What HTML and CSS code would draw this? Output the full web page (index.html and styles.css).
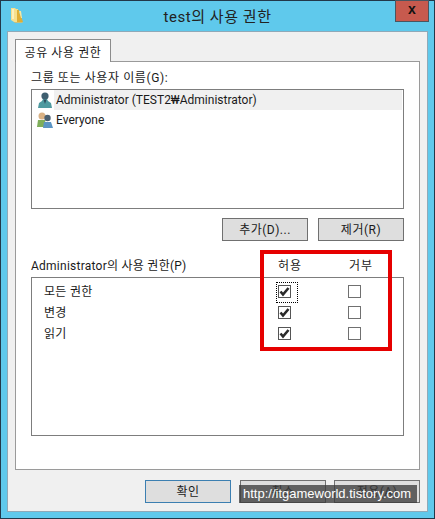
FILE: index.html
```html
<!DOCTYPE html>
<html lang="ko">
<head>
<meta charset="utf-8">
<title>test의 사용 권한</title>
<link rel="stylesheet" href="styles.css">
</head>
<body>
<div class="window">
  <header class="titlebar">
    <svg class="folder" width="13" height="17" viewBox="0 0 13 17"><path d="M0 1h4l1 1h2v13H3l-3-2z" fill="#f6e08e"/><path d="M6 3h2v2l3 7 1 3H6z" fill="#dfae35"/><path d="M8 4h2l1 7H10z" fill="#f8e6a0"/><path d="M3 15h8l1 1H4z" fill="#c9c07a"/><path d="M1 2h2v10H1z" fill="#fcf0bd"/></svg>
    <h1 class="title">test의 사용 권한</h1>
    <button class="close">x</button>
  </header>
  <main class="content">
    <div class="tabs"><div class="tab">공유 사용 권한</div></div>
    <section class="panel">
      <div class="label">그룹 또는 사용자 이름(G):</div>
      <ul class="list users">
        <li class="user selected">
          <svg class="uicon" width="16" height="18" viewBox="0 0 16 18"><circle cx="8" cy="5" r="3.6" fill="#3f5f70"/><path d="M6 8h4l1 2 3 2 1 5H1l1-5 3-2z" fill="#4f9aa0"/><path d="M6.500 8.500h3L8 13z" fill="#2f4c5c"/></svg>
          <span class="uname">Administrator (TEST2₩Administrator)</span>
        </li>
        <li class="user">
          <svg class="uicon" width="16" height="18" viewBox="0 0 16 18"><circle cx="5" cy="5" r="3.500" fill="#d9b184"/><path d="M1 9h7l1 7H0z" fill="#7fae5a"/><circle cx="10.500" cy="7" r="3.200" fill="#4a5f70"/><path d="M7 11h7l2 6H6z" fill="#5b94c4"/></svg>
          <span class="uname">Everyone</span>
        </li>
      </ul>
      <div class="actions">
        <button class="btn">추가(D)...</button>
        <button class="btn">제거(R)</button>
      </div>
      <div class="perm-head">
        <span class="perm-title">Administrator의 사용 권한(P)</span>
        <span class="perm-col">허용</span>
        <span class="perm-col">거부</span>
      </div>
      <div class="list perms">
        <span class="perm-name">모든 권한</span>
        <span class="box checked focus"><svg class="tick" width="11" height="11" viewBox="0 0 11 11"><path d="M1.500 5.500 4 8.500 9.500 2" fill="none" stroke="#2a2a2a" stroke-width="2.600"/></svg></span>
        <span class="box"></span>
        <span class="perm-name">변경</span>
        <span class="box checked"><svg class="tick" width="11" height="11" viewBox="0 0 11 11"><path d="M1.500 5.500 4 8.500 9.500 2" fill="none" stroke="#2a2a2a" stroke-width="2.600"/></svg></span>
        <span class="box"></span>
        <span class="perm-name">읽기</span>
        <span class="box checked"><svg class="tick" width="11" height="11" viewBox="0 0 11 11"><path d="M1.500 5.500 4 8.500 9.500 2" fill="none" stroke="#2a2a2a" stroke-width="2.600"/></svg></span>
        <span class="box"></span>
      </div>
    </section>
    <footer class="footer">
      <button class="btn default">확인</button>
      <button class="btn">취소</button>
      <button class="btn">적용(A)</button>
    </footer>
  </main>
  <div class="highlight"></div>
  <div class="watermark">http://itgameworld.tistory.com</div>
</div>
</body>
</html>
```
FILE: styles.css
```css
* { box-sizing: border-box; }
html, body { margin: 0; padding: 0; }
body {
  width: 435px;
  height: 519px;
  overflow: hidden;
  font-family: Roboto, "Noto Sans CJK KR", sans-serif;
  font-size: 12px;
  color: #1a1a1a;
}
.window {
  position: relative;
  width: 435px;
  height: 519px;
  display: flex;
  flex-direction: column;
  padding: 0 6px 6px;
  background: #5fc9ec;
  border: 1px solid #22384a;
}
.titlebar {
  position: relative;
  height: 30px;
  flex: none;
  padding-bottom: 2px;
  display: flex;
  align-items: center;
  justify-content: center;
}
.folder { position: absolute; left: 4px; top: 6px; }
.title {
  margin: 0;
  font-size: 15px;
  font-weight: 400;
  letter-spacing: .55px;
  color: #222;
}
.close {
  position: absolute;
  right: -1px;
  top: -1px;
  width: 34px;
  height: 22px;
  padding: 0 0 4px;
  border: 1px solid #4a5560;
  background: #c75a4e;
  color: #111;
  font: 700 14px "Liberation Sans", sans-serif;
}
.content {
  flex: 1;
  display: flex;
  flex-direction: column;
  padding: 7px 7px 8px;
  background: #f0f0f0;
  border: 1px solid #8fa9b8;
}
.tabs { display: flex; height: 23px; flex: none; }
.tab {
  position: relative;
  z-index: 1;
  height: 23px;
  width: 96px;
  display: flex;
  align-items: center;
  justify-content: center;
  background: #fff;
  border: 1px solid #8c8c8c;
  border-bottom: 0;
  letter-spacing: .6px;
}
.panel {
  flex: 1;
  margin-top: -1px;
  padding: 7px 15px 0;
  background: #fff;
  border: 1px solid #9a9a9a;
  display: flex;
  flex-direction: column;
}
.label { height: 20px; line-height: 19px; letter-spacing: .6px; }
.list {
  margin: 0;
  padding: 0;
  list-style: none;
  background: #fff;
  border: 1px solid #7d7d7d;
}
.users { height: 120px; padding: 0 1px; }
.user {
  height: 20px;
  display: flex;
  align-items: center;
  padding-left: 4px;
  gap: 1px;
}
.uicon { flex: none; }
.uname { flex: 1; height: 20px; line-height: 20px; padding-left: 2px; }
.selected .uname { background: #f0f0f0; }
.actions {
  display: flex;
  justify-content: flex-end;
  gap: 10px;
  margin-top: 9px;
}
.btn {
  width: 86px;
  height: 23px;
  padding: 0 0 2px;
  font: inherit;
  letter-spacing: .5px;
  color: #1a1a1a;
  background: #dedede;
  border: 1px solid #707070;
}
.default { border-color: #3c7fb1; margin-right: 1px; }
.perm-head {
  display: flex;
  align-items: center;
  height: 22px;
  margin-top: 14px;
  padding: 0 23px 3px 0;
}
.perm-title { flex: 1; letter-spacing: .25px; }
.perm-col { width: 40px; margin-left: 31px; text-align: center; letter-spacing: 1px; }
.perms {
  height: 159px;
  padding-top: 3px;
  display: grid;
  grid-template-columns: 246px 13px 57px 13px;
  grid-auto-rows: 21px;
  align-items: center;
  align-content: start;
}
.perm-name { padding: 0 0 2px 12px; letter-spacing: .3px; }
.box {
  position: relative;
  width: 13px;
  height: 13px;
  background: #fff;
  border: 1px solid #707070;
  grid-column: 4;
  display: block;
}
.box.checked { grid-column: 2; border-color: #555; }
.tick { display: block; }
.focus::after {
  content: "";
  position: absolute;
  left: -3px;
  top: -4px;
  width: 20px;
  height: 19px;
  border: 1px dotted #000;
}
.footer {
  display: flex;
  justify-content: flex-end;
  gap: 8px;
  margin-top: 10px;
}
.highlight {
  position: absolute;
  left: 259px;
  top: 249px;
  width: 132px;
  height: 101px;
  border: 4px solid #e60000;
}
.watermark {
  position: absolute;
  left: 238px;
  top: 484px;
  width: 178px;
  height: 18px;
  padding-left: 4px;
  background: rgba(60, 60, 60, .78);
  color: #fff;
  font: 13px/18px "Liberation Sans", sans-serif;
  white-space: nowrap;
}
```
